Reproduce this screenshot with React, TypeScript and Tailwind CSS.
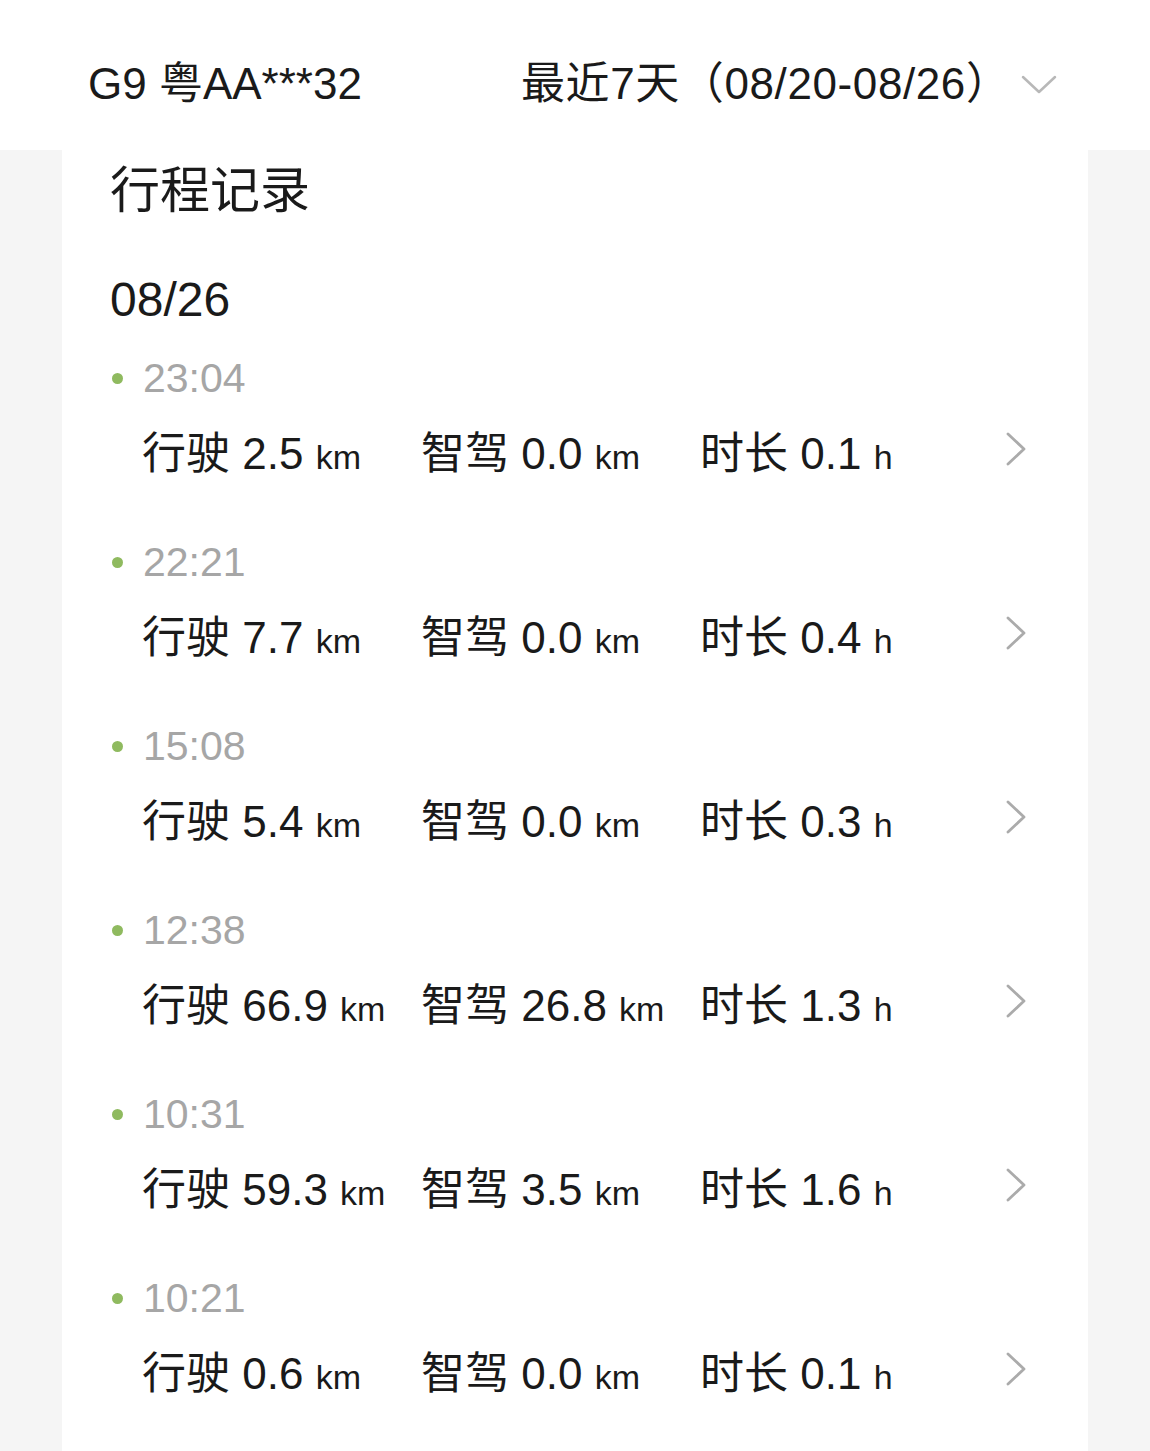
import React from "react";

const trips = [
  { time: "23:04", drive: "2.5", smart: "0.0", hours: "0.1" },
  { time: "22:21", drive: "7.7", smart: "0.0", hours: "0.4" },
  { time: "15:08", drive: "5.4", smart: "0.0", hours: "0.3" },
  { time: "12:38", drive: "66.9", smart: "26.8", hours: "1.3" },
  { time: "10:31", drive: "59.3", smart: "3.5", hours: "1.6" },
  { time: "10:21", drive: "0.6", smart: "0.0", hours: "0.1" },
];

const font = { fontFamily: '"Liberation Sans", "Noto Sans CJK SC", sans-serif' };

function Stat({ label, value, unit }: { label: string; value: string; unit: string }) {
  return (
    <div className="w-[279px] shrink-0 whitespace-nowrap text-[44px] leading-[60px] text-[#1a1a1a]">
      {label} {value} <span className="text-[34px]">{unit}</span>
    </div>
  );
}

export default function App() {
  return (
    <div className="min-h-[1451px] w-[1150px] bg-[#f5f5f5]" style={font}>
      <header className="flex h-[150px] items-center bg-white pt-[18px] text-[#1a1a1a]">
        <div className="ml-[88px] w-[433px] text-[44px] leading-none">G9 粤AA***32</div>
        <div className="text-[44px] leading-none tracking-[0.6px]">最近7天（08/20-08/26）</div>
        <svg className="ml-[10px] mt-[2px]" width="36" height="20" viewBox="0 0 36 20" fill="none">
          <path d="M2 2 L18 17 L34 2" stroke="#b8b8b8" strokeWidth="2.5" strokeLinecap="round" strokeLinejoin="round" />
        </svg>
      </header>

      <main className="mx-[62px] min-h-[1301px] bg-white pl-[48px] pr-[60px] pt-[11px]">
        <h1 className="text-[50px] leading-[60px] text-[#1a1a1a]">行程记录</h1>
        <div className="mt-[49px] text-[48px] leading-[60px] text-[#1a1a1a]">08/26</div>

        <ul className="mt-[23px] flex flex-col gap-[52px]">
          {trips.map((t) => (
            <li key={t.time}>
              <div className="flex h-[50px] items-center">
                <span className="ml-[2px] mr-[20px] h-[11px] w-[11px] rounded-full bg-[#8fba5f]" />
                <span className="text-[41px] leading-[50px] text-[#a6a6a6]">{t.time}</span>
              </div>
              <div className="mt-[22px] flex h-[60px] items-center pl-[32px]">
                <Stat label="行驶" value={t.drive} unit="km" />
                <Stat label="智驾" value={t.smart} unit="km" />
                <Stat label="时长" value={t.hours} unit="h" />
                <svg className="ml-auto mt-[-12px] mr-[1px]" width="22" height="34" viewBox="0 0 22 34" fill="none">
                  <path d="M3 2 L19 17 L3 32" stroke="#ababab" strokeWidth="2.8" strokeLinecap="round" strokeLinejoin="round" />
                </svg>
              </div>
            </li>
          ))}
        </ul>
      </main>
    </div>
  );
}
